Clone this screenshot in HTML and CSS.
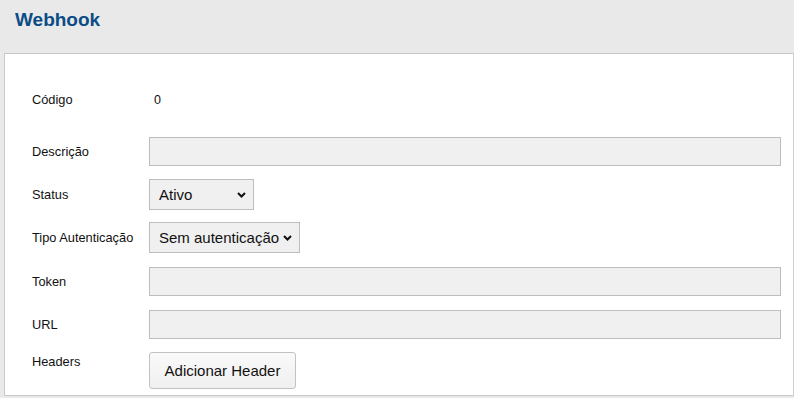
FILE: index.html
```html
<!DOCTYPE html>
<html>
<head>
	<meta charset="utf-8">
	<title>Webhook</title>
	<link rel="stylesheet" href="styles.css">
</head>
<body>
<div class="header">
	<h2 class="title">Webhook</h2>
</div>
<div class="panel">
	<div class="row row-code">
		<label>Código</label>
		<span class="value">0</span>
	</div>
	<div class="row row-first">
		<label>Descrição</label>
		<input type="text" class="field">
	</div>
	<div class="row">
		<label>Status</label>
		<select class="combo combo-status">
			<option>Ativo</option>
			<option>Inativo</option>
		</select>
	</div>
	<div class="row">
		<label>Tipo Autenticação</label>
		<select class="combo combo-auth">
			<option>Sem autenticação</option>
			<option>Bearer Token</option>
		</select>
	</div>
	<div class="row row-token">
		<label>Token</label>
		<input type="text" class="field">
	</div>
	<div class="row">
		<label>URL</label>
		<input type="text" class="field">
	</div>
	<div class="row row-headers">
		<label>Headers</label>
		<button class="button">Adicionar Header</button>
	</div>
</div>
</body>
</html>
```

FILE: styles.css
```css
* {
	margin: 0;
	padding: 0;
	box-sizing: border-box;
}
body {
	background-color: #e9e9e9;
	font-family: "Liberation Sans", Arial, sans-serif;
	color: #111;
	height: 398px;
	overflow: hidden;
}
.header {
	height: 53px;
	padding: 9px 15px 0;
}
.title {
	font-size: 19px;
	line-height: 22px;
	font-weight: bold;
	color: #0b4c86;
}
.panel {
	margin-left: 4px;
	background: #fff;
	border: 1px solid #c8c8c8;
	border-right-color: #d0d0d0;
	padding: 24px 12px 6px 27px;
	height: 343px;
}
.row {
	display: flex;
	align-items: center;
	height: 43px;
}
.row label {
	width: 117px;
	font-size: 12.8px;
	flex-shrink: 0;
}
.row-first {
	margin-top: 9px;
}
.row-token {
	margin-top: 1px;
}
.value {
	font-size: 12.5px;
	padding-left: 5px;
}
.field {
	flex: 1;
	height: 29px;
	background: #f0f0f0;
	border: 1px solid #bdbdbd;
	outline: none;
}
.combo {
	appearance: none;
	-webkit-appearance: none;
	height: 31px;
	background: #f0f0f0 url("data:image/svg+xml,%3Csvg xmlns='http://www.w3.org/2000/svg' width='9' height='6' viewBox='0 0 9 6'%3E%3Cpath d='M1 1l3.5 3.5L8 1' fill='none' stroke='%23111' stroke-width='2'/%3E%3C/svg%3E") no-repeat right 7px center;
	border: 1px solid #bdbdbd;
	font-family: "Liberation Sans", Arial, sans-serif;
	font-size: 15px;
	color: #111;
	padding-left: 9px;
	outline: none;
}
.combo-status {
	width: 105px;
}
.combo-auth {
	width: 151px;
}
.row-headers {
	align-items: flex-start;
	height: auto;
	padding-top: 6px;
}
.row-headers label {
	padding-top: 2px;
}
.button {
	width: 147px;
	height: 37px;
	font-family: "Liberation Sans", Arial, sans-serif;
	font-size: 15px;
	color: #111;
	background: linear-gradient(#fafafa, #efefef);
	border: 1px solid #c2c2c2;
	border-radius: 3px;
	cursor: pointer;
}
```
